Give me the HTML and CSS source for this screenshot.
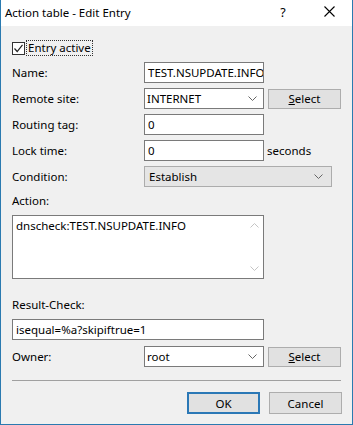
FILE: index.html
```html
<!DOCTYPE html>
<html>
<head>
<meta charset="utf-8">
<link rel="stylesheet" href="styles.css">
</head>
<body>
<div class="window">
  <div class="titlebar">
    <span class="title">Action table - Edit Entry</span>
    <span class="help">?</span>
    <span class="close"><svg width="11" height="11" viewBox="0 0 11 11"><path d="M0.5 0.5 L10.5 10.5 M10.5 0.5 L0.5 10.5" stroke="#000" stroke-width="1.1" fill="none"/></svg></span>
  </div>
  <div class="content">
    <div class="check-row">
      <span class="checkbox"><svg width="11" height="11" viewBox="0 0 11 11"><path d="M1.5 5.5 L4.2 8.5 L9.5 1.8" stroke="#222" stroke-width="1.2" fill="none"/></svg></span>
      <span class="check-label">Entry active</span>
    </div>
    <div class="row">
      <span class="label">Name:</span>
      <div class="field input">TEST.NSUPDATE.INFO</div>
    </div>
    <div class="row">
      <span class="label">Remote site:</span>
      <div class="field combo">INTERNET<span class="chev"><svg width="9" height="5" viewBox="0 0 9 5"><path d="M0.5 0.5 L4.5 4.5 L8.5 0.5" stroke="#666" fill="none"/></svg></span></div>
      <div class="btn small"><u>S</u>elect</div>
    </div>
    <div class="row">
      <span class="label">Routing tag:</span>
      <div class="field input">0</div>
    </div>
    <div class="row">
      <span class="label">Lock time:</span>
      <div class="field input">0</div>
      <span class="unit">seconds</span>
    </div>
    <div class="row">
      <span class="label">Condition:</span>
      <div class="field combo wide">Establish<span class="chev"><svg width="9" height="5" viewBox="0 0 9 5"><path d="M0.5 0.5 L4.5 4.5 L8.5 0.5" stroke="#666" fill="none"/></svg></span></div>
    </div>
    <div class="lbl-line first">Action:</div>
    <div class="textarea">
      <div class="ta-text">dnscheck:TEST.NSUPDATE.INFO</div>
      <div class="scroll">
        <svg width="9" height="5" viewBox="0 0 9 5"><path d="M0.5 4.5 L4.5 0.5 L8.5 4.5" stroke="#c4c4c4" fill="none"/></svg>
        <svg width="9" height="5" viewBox="0 0 9 5"><path d="M0.5 0.5 L4.5 4.5 L8.5 0.5" stroke="#c4c4c4" fill="none"/></svg>
      </div>
    </div>
    <div class="lbl-line">Result-Check:</div>
    <div class="field input full">isequal=%a?skipiftrue=1</div>
    <div class="row owner">
      <span class="label">Owner:</span>
      <div class="field combo">root<span class="chev"><svg width="9" height="5" viewBox="0 0 9 5"><path d="M0.5 0.5 L4.5 4.5 L8.5 0.5" stroke="#666" fill="none"/></svg></span></div>
      <div class="btn small"><u>S</u>elect</div>
    </div>
    <div class="sep"></div>
    <div class="buttons">
      <div class="btn default">OK</div>
      <div class="btn">Cancel</div>
    </div>
  </div>
</div>
</body>
</html>
```

FILE: styles.css
```css
html, body {
  margin: 0;
  padding: 0;
  background: #f0f0f0;
}
body {
  font-family: "Noto Sans", "Liberation Sans", sans-serif;
  font-size: 11.5px;
  color: #000;
}
.window {
  width: 353px;
  height: 425px;
  box-sizing: border-box;
  border: 1px solid #2a7ab0;
  border-top: none;
  background: #f0f0f0;
  display: flex;
  flex-direction: column;
}
.titlebar {
  height: 26px;
  background: #fff;
  display: flex;
  align-items: center;
  font-size: 11.5px;
}
.title {
  margin-left: 4px;
  flex: 1;
  margin-top: -2px;
}
.help {
  width: 46px;
  text-align: center;
  margin-top: -2px;
  font-size: 12.5px;
}
.close {
  width: 46px;
  display: flex;
  justify-content: center;
  margin-top: -3px;
}
.content {
  padding: 0 11px 0 11px;
  display: flex;
  flex-direction: column;
}
.check-row {
  display: flex;
  align-items: center;
  margin-top: 15px;
  height: 14px;
}
.checkbox {
  width: 11px;
  height: 11px;
  border: 1px solid #333;
  background: #fff;
  display: flex;
}
.check-label {
  margin-left: 2px;
  outline: 1px dotted #333;
  padding: 0 1px;
  line-height: 14px;
}
.row {
  display: flex;
  align-items: center;
  height: 21px;
  margin-top: 5px;
}
.row:nth-child(2) {
  margin-top: 7px;
}
.label {
  width: 132px;
  flex: none;
}
.field {
  box-sizing: border-box;
  height: 21px;
  border: 1px solid #7a7a7a;
  background: #fff;
  display: flex;
  align-items: center;
  padding-left: 3px;
  width: 120px;
  white-space: nowrap;
  overflow: hidden;
  position: relative;
}
.combo {
  padding-left: 2px;
}
.chev {
  position: absolute;
  right: 6px;
  top: 7px;
  display: flex;
}
.combo.wide {
  width: 188px;
  background: #e5e5e5;
  border-color: #acacac;
  padding-left: 4px;
}
.combo.wide .chev {
  right: 8px;
}
.unit {
  margin-left: 3px;
}
.btn {
  box-sizing: border-box;
  height: 21px;
  width: 73px;
  background: #e1e1e1;
  border: 1px solid #adadad;
  display: flex;
  align-items: center;
  justify-content: center;
}
.btn.small {
  margin-left: 4px;
  height: 20px;
  width: 73px;
}
.lbl-line {
  height: 16px;
  line-height: 16px;
}
.lbl-line.first {
  margin-top: 6px;
}
.textarea {
  box-sizing: border-box;
  margin-top: 6px;
  width: 252px;
  height: 64px;
  border: 1px solid #7a7a7a;
  background: #fff;
  display: flex;
}
.ta-text {
  flex: 1;
  padding: 2px 0 0 3px;
}
.scroll {
  width: 17px;
  display: flex;
  flex-direction: column;
  justify-content: space-between;
  align-items: center;
  padding: 7px 0 7px 0;
}
.textarea + .lbl-line {
  margin-top: 18px;
}
.field.full {
  width: 252px;
  margin-top: 6px;
}
.row.owner {
  margin-top: 6px;
}
.sep {
  margin-top: 13px;
  height: 1px;
  background: #a0a0a0;
  width: 329px;
}
.buttons {
  display: flex;
  justify-content: flex-end;
  gap: 9px;
  margin-top: 11px;
  width: 330px;
}
.buttons .btn {
  width: 73px;
  height: 22px;
}
.btn.default {
  border: 2px solid #2b78b6;
}
```
